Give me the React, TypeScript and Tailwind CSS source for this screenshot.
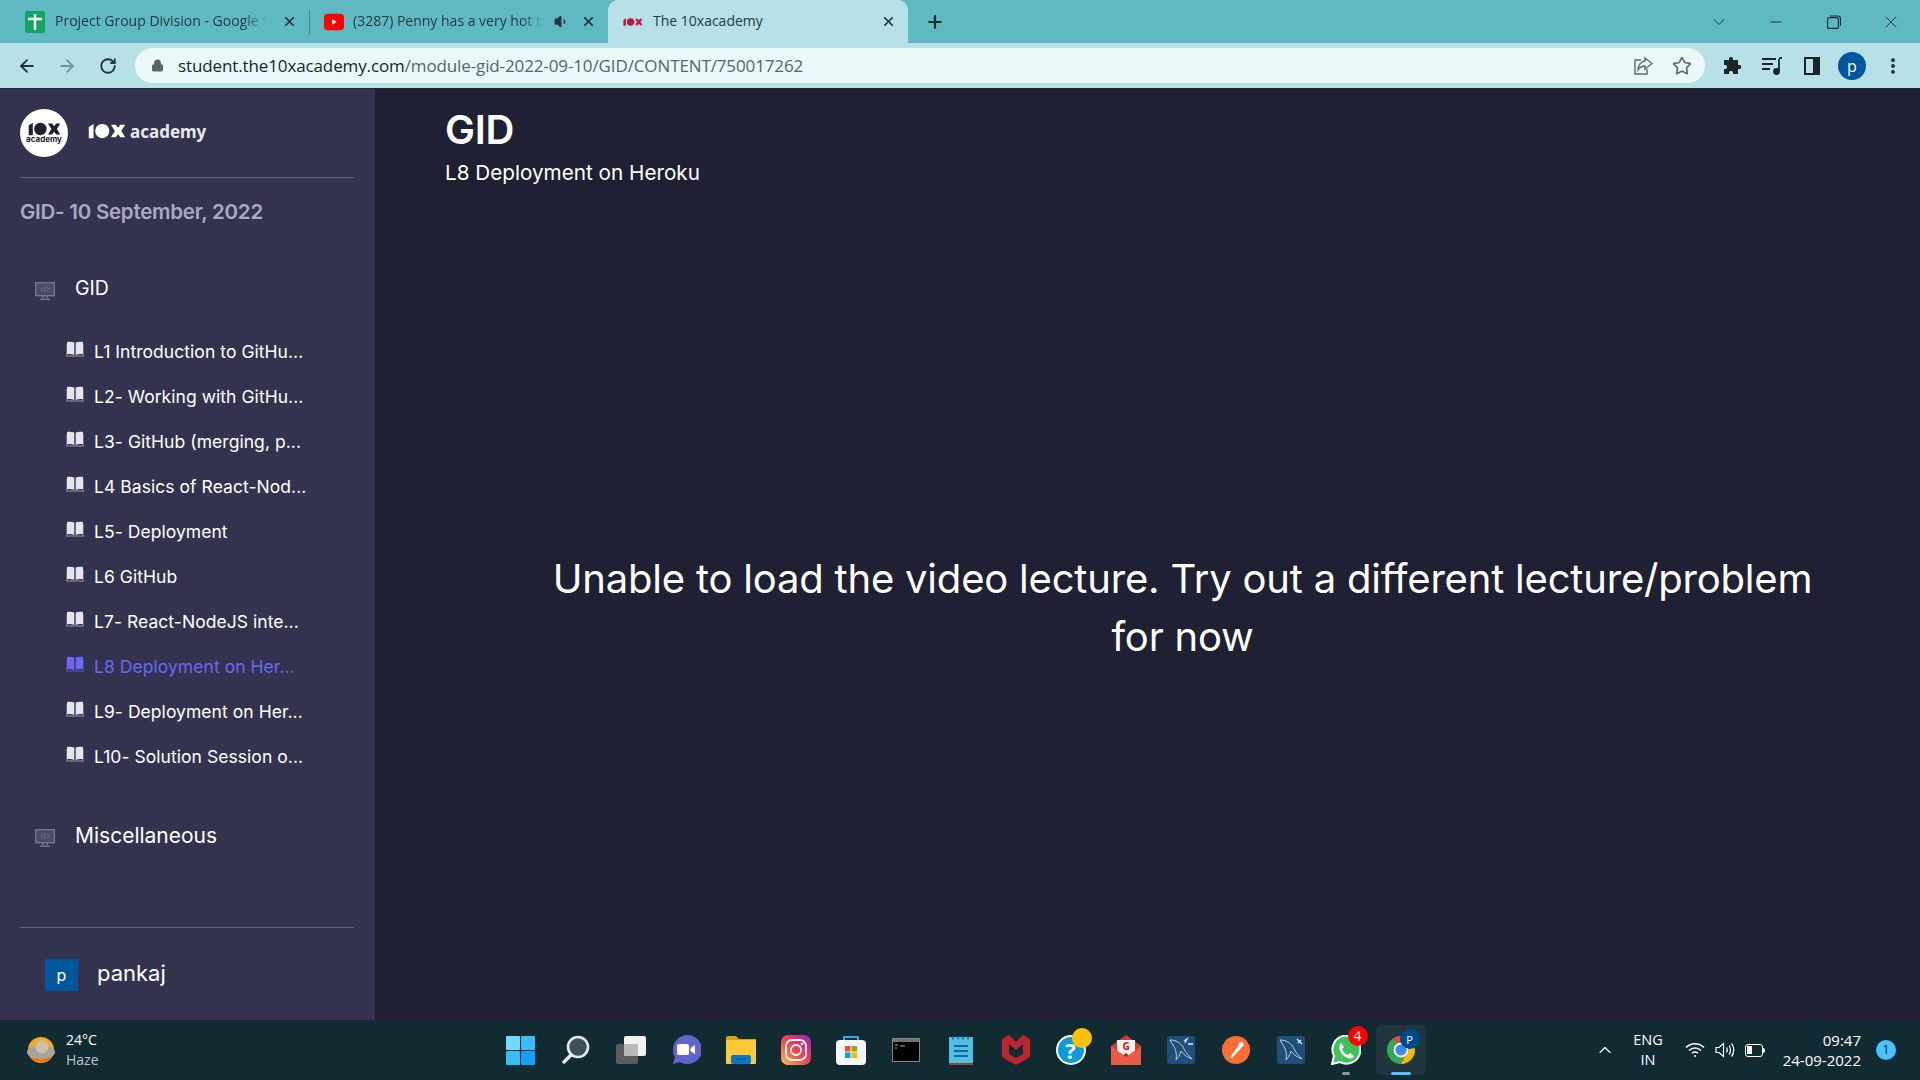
import { ArrowLeft, ArrowRight, RotateCw, Lock, Star, MoreVertical, X, Plus, ChevronDown, Minus, ChevronUp, Volume1 } from "lucide-react";

const lessons = [
  "L1 Introduction to GitHu...",
  "L2- Working with GitHu...",
  "L3- GitHub (merging, p...",
  "L4 Basics of React-Nod...",
  "L5- Deployment",
  "L6 GitHub",
  "L7- React-NodeJS inte...",
  "L8 Deployment on Her...",
  "L9- Deployment on Her...",
  "L10- Solution Session o...",
];

function Mark({ color, className }: { color: string; className: string }) {
  return (
    <svg viewBox="0 0 48 20" className={className} fill={color}>
      <path d="M1 5 L7 1 V19 H1 Z" />
      <circle cx="18" cy="10" r="9" />
      <path d="M29 2 h6 l3 4 3-4 h6 l-5 8 5 8 h-6 l-3-4-3 4 h-6 l5-8 Z" />
    </svg>
  );
}

function Book({ active }: { active?: boolean }) {
  const fill = active ? "#6a67f0" : "#e4e4ea";
  return (
    <svg viewBox="0 0 18 16" className="mt-[-7px] h-[16px] w-[18px] shrink-0">
      <path d="M1 1 C3.5 0.4 6 0.6 8.3 1.6 V14 C6 13 3.5 12.8 1 13.4 Z" fill={fill} />
      <path d="M17 1 C14.5 0.4 12 0.6 9.7 1.6 V14 C12 13 14.5 12.8 17 13.4 Z" fill={fill} />
      <path d="M0 3 V15 H18 V3" fill="none" stroke={active ? "#5553c4" : "#9a9aa8"} strokeWidth="1" />
    </svg>
  );
}

function Monitor() {
  return (
    <svg viewBox="0 0 20 20" className="mt-[4px] h-[20px] w-[20px] shrink-0" fill="none" stroke="#74748e">
      <rect x="0.7" y="1.7" width="18.6" height="13" strokeWidth="1.4" fill="#4b4b66" />
      <path d="M8 6 L5.8 8 L8 10 M12 6 L14.2 8 L12 10 M10.8 5.5 L9.2 10.5" strokeWidth="0.9" />
      <path d="M8 15 V17 M12 15 V17 M5 18.3 H15" strokeWidth="1.6" />
    </svg>
  );
}

function Tab({ icon, title, active, audio, className }: { icon: React.ReactNode; title: string; active?: boolean; audio?: boolean; className: string }) {
  return (
    <div className={`flex h-[43px] items-center pr-[12px] ${className} ${active ? "rounded-t-[10px] bg-[#b7e1e6]" : ""}`}>
      <span className="flex shrink-0 items-center">{icon}</span>
      <span className={`mt-[-2px] min-w-0 flex-1 overflow-hidden whitespace-nowrap text-[14px] text-[#263a3f] ${active ? "" : "[mask-image:linear-gradient(to_right,black_88%,transparent)]"}`}>{title}</span>
      {audio && (
        <Volume1 size={15} className="ml-[10px] mr-[12px] shrink-0 text-[#26363a]" fill="#26363a" />
      )}
      <X size={15} strokeWidth={2.6} className={`shrink-0 text-[#1f2d30] ${audio || active ? "" : "ml-[14px]"}`} />
    </div>
  );
}

function TaskIcon({ children, active, dot }: { children: React.ReactNode; active?: boolean; dot?: boolean }) {
  return (
    <div className={`relative flex h-[50px] w-[50px] items-center justify-center rounded-[5px] mx-[2.5px] ${active ? "bg-[#20353d]" : ""}`}>
      {children}
      {dot && <span className="absolute bottom-[0px] h-[3px] w-[8px] rounded-full bg-[#8a979b]" />}
      {active && <span className="absolute bottom-[0px] h-[3px] w-[20px] rounded-full bg-[#4cc2ff]" />}
    </div>
  );
}

function MysqlTile({ tail }: { tail: string }) {
  return (
    <svg viewBox="0 0 28 28" className="h-[28px] w-[28px]">
      <rect width="28" height="28" rx="3" fill="#1f4e79" />
      <path d="M3 4 C10 4 15 8 17 13 C19 17 22 20 25 23 C20 21 17 19 14 15 C13 19 11 22 9 24 C10 19 9 13 6 9 Z" fill="none" stroke="#b9cddd" strokeWidth="1" />
      <path d={tail} fill="none" stroke="#dbe6ee" strokeWidth="1.4" />
    </svg>
  );
}

export default function App() {
  return (
    <div className="flex h-[1080px] w-[1920px] flex-col overflow-hidden bg-[#1f2033] font-['Open_Sans',sans-serif]">
      {/* browser chrome */}
      <div className="flex h-[43px] shrink-0 items-center bg-[#5eb9c3]">
        <Tab
          className="w-[309px] pl-[25px]"
          title="Project Group Division - Google S"
          icon={
            <svg viewBox="0 0 20 22" className="mr-[10px] h-[22px] w-[20px]">
              <rect width="20" height="22" rx="2" fill="#13a362" />
              <path d="M10 3 V19 M3 8 H17" stroke="#fff" strokeWidth="2.4" />
            </svg>
          }
        />
        <div className="h-[24px] w-px bg-[#3e8790]" />
        <Tab
          className="w-[298px] pl-[14px]"
          audio
          title="(3287) Penny has a very hot b"
          icon={
            <svg viewBox="0 0 22 18" className="mr-[9px] h-[18px] w-[20px]">
              <rect width="22" height="18" rx="4" fill="#f00" />
              <path d="M9 6 L14 9 L9 12 Z" fill="#fff" />
            </svg>
          }
        />
        <Tab
          active
          className="w-[300px] pl-[15px]"
          title="The 10xacademy"
          icon={<Mark color="#c2183f" className="mr-[10px] h-[10px] w-[20px]" />}
        />
        <Plus size={20} strokeWidth={2.6} className="ml-[17px] text-[#1f2d30]" />
        <div className="ml-auto flex items-center pr-[19px] text-[#1c2a2d]">
          <ChevronDown size={20} strokeWidth={1.1} />
          <Minus size={18} strokeWidth={1.2} className="ml-[38px]" />
          <svg viewBox="0 0 14 14" className="ml-[42px] h-[14px] w-[14px]" fill="none" stroke="currentColor" strokeWidth="1.1">
            <rect x="0.6" y="2.6" width="10.8" height="10.8" rx="2" />
            <path d="M3 1 H11 Q13.4 1 13.4 3.4 V11" />
          </svg>
          <X size={20} strokeWidth={1.1} className="ml-[40px]" />
        </div>
      </div>
      <div className="flex h-[45px] shrink-0 items-center bg-[#b7e1e6]">
        <ArrowLeft size={20} strokeWidth={2.2} className="ml-[17px] text-[#24343a]" />
        <ArrowRight size={20} strokeWidth={2.2} className="ml-[20px] text-[#75939a]" />
        <RotateCw size={18} strokeWidth={2.4} className="ml-[22px] text-[#24343a]" />
        <div className="ml-[18px] flex h-[35px] w-[1570px] items-center rounded-full bg-[#ebf8f9] pl-[16px] pr-[13px]">
          <Lock size={13} strokeWidth={2.4} fill="#5a6468" className="text-[#5a6468]" />
          <span className="ml-[14px] whitespace-nowrap text-[17px] tracking-[-0.12px] text-[#53666b]">
            <span className="text-[#16262b]">student.the10xacademy.com</span>/module-gid-2022-09-10/GID/CONTENT/750017262
          </span>
          <svg viewBox="0 0 20 20" className="ml-auto h-[20px] w-[20px]" fill="none" stroke="#5f6a6e" strokeWidth="1.4">
            <path d="M8 4 H2 V18 H14 V13" />
            <path d="M12 2 L19 7.5 L12 13 V10 C8.5 10 6.5 11.5 5 14 C5 9 8 5.5 12 5 Z" />
          </svg>
          <Star size={20} strokeWidth={2} className="ml-[19px] text-[#5f6a6e]" />
        </div>
        <svg viewBox="0 0 20 20" className="ml-[17px] h-[20px] w-[20px]" fill="#1d2426">
          <path d="M7 2.5 C7 0.5 11 0.5 11 2.5 V4 H16 V9 H17.5 C19.8 9 19.8 13 17.5 13 H16 V18 H11 V16.5 C11 14.5 7 14.5 7 16.5 V18 H2 V13 H3.5 C5.5 13 5.5 9 3.5 9 H2 V4 H7 Z" />
        </svg>
        <svg viewBox="0 0 20 18" className="ml-[20px] h-[18px] w-[20px]" fill="none" stroke="#1d2426" strokeWidth="1.8">
          <path d="M0 2 H14 M0 7 H11 M0 12 H8" />
          <path d="M17 2 V14" />
          <path d="M17 1 H20" />
          <circle cx="14.5" cy="14.5" r="2.5" fill="#1d2426" />
        </svg>
        <div className="ml-[22px] flex h-[18px] w-[16px] justify-end border-[2.5px] border-[#1d2426] bg-[#b7e1e6]">
          <div className="w-[5px] bg-[#1d2426]" />
        </div>
        <div className="ml-[18px] flex h-[28px] w-[28px] items-center justify-center rounded-full bg-[#01579b] text-[16px] leading-none text-white">p</div>
        <MoreVertical size={20} strokeWidth={2.6} className="ml-[17px] text-[#1d2426]" />
      </div>

      {/* page */}
      <div className="flex min-h-0 flex-1 border-t border-[#1b2a30] font-['Inter',sans-serif]">
        <aside className="flex w-[375px] shrink-0 flex-col bg-[#33334f] pl-[20px] pr-[21px]">
          <div className="flex items-center pt-[20px] pb-[20px]">
            <div className="flex h-[48px] w-[48px] flex-col items-center justify-center rounded-full bg-white">
              <Mark color="#20202f" className="h-[14px] w-[33px]" />
              <span className="mt-[-1px] text-[8px] font-bold leading-[9px] text-[#20202f]">academy</span>
            </div>
            <div className="mb-[4px] ml-[20px] flex items-center">
              <Mark color="#fff" className="h-[16px] w-[38px]" />
              <span className="ml-[4px] font-['Noto_Sans',sans-serif] text-[17px] font-bold leading-none text-[#e8e8ee]">academy</span>
            </div>
          </div>
          <div className="h-px bg-[#62627a]" />
          <h2 className="mt-[21px] text-[20.5px] font-semibold leading-[26px] tracking-[-0.25px] text-[#a9a9c4]">GID- 10 September, 2022</h2>

          <div className="mt-[49px] flex h-[30px] items-center pl-[15px]">
            <Monitor />
            <span className="ml-[20px] text-[19.5px] text-white">GID</span>
          </div>
          <ul className="mt-[26px] flex flex-col pl-[46px]">
            {lessons.map((l, i) => (
              <li key={l} className="flex h-[45px] items-center gap-[10px]">
                <Book active={i === 7} />
                <span className={`whitespace-nowrap text-[17.5px] tracking-[0.05px] ${i === 7 ? "text-[#6a67f0]" : "text-white"}`}>{l}</span>
              </li>
            ))}
          </ul>
          <div className="mt-[41px] flex h-[30px] items-center pl-[15px]">
            <Monitor />
            <span className="ml-[20px] text-[21px] text-white">Miscellaneous</span>
          </div>
          <div className="mt-[76px] h-px bg-[#62627a]" />
          <div className="mt-[31px] flex items-center pl-[25px]">
            <div className="flex h-[32px] w-[33px] items-center justify-center bg-[#01579b] text-[16px] text-white">p</div>
            <span className="ml-[19px] mt-[-4px] text-[22px] text-white">pankaj</span>
          </div>
        </aside>
        <main className="flex min-w-0 flex-1 flex-col pl-[70px]">
          <h1 className="mt-[19px] text-[40px] font-semibold leading-[44px] tracking-[-0.3px] text-white">GID</h1>
          <p className="mt-[6px] text-[20.7px] leading-[30px] text-white">L8 Deployment on Heroku</p>
          <div className="mt-[362px] flex justify-center">
            <p className="w-[1300px] text-center text-[40px] leading-[58px] tracking-[-0.2px] text-white">
              Unable to load the video lecture. Try out a different lecture/problem for now
            </p>
          </div>
        </main>
      </div>

      {/* windows taskbar */}
      <footer className="grid h-[60px] shrink-0 grid-cols-[1fr_auto_1fr] items-center bg-[#122a32] font-['Open_Sans',sans-serif]">
        <div className="flex items-center pl-[26px]">
          <svg viewBox="0 0 30 26" className="h-[26px] w-[30px]">
            <circle cx="15" cy="13" r="13" fill="#f9a825" />
            <path d="M15 26 A13 13 0 0 0 28 14 H2 A13 13 0 0 0 15 26" fill="#ef7c00" />
            <ellipse cx="15" cy="15" rx="14" ry="7" fill="#a9a49a" />
            <circle cx="16" cy="10" r="6.5" fill="#c8c0b2" />
          </svg>
          <div className="ml-[10px] text-[14px] leading-[20px]">
            <div className="text-white">24°C</div>
            <div className="text-[#bcc5c8]">Haze</div>
          </div>
        </div>
        <div className="ml-[1px] flex items-center">
          <TaskIcon>
            <svg viewBox="0 0 29 29" className="h-[29px] w-[29px]">
              <rect width="14" height="14" rx="1" fill="#6fdcff" />
              <rect x="15" width="14" height="14" rx="1" fill="#38bdf8" />
              <rect y="15" width="14" height="14" rx="1" fill="#35bdf6" />
              <rect x="15" y="15" width="14" height="14" rx="1" fill="#14a0f5" />
            </svg>
          </TaskIcon>
          <TaskIcon>
            <svg viewBox="0 0 28 30" className="h-[30px] w-[28px]" fill="none">
              <circle cx="16" cy="12" r="10" fill="#3d5158" stroke="#e6e9ea" strokeWidth="2.6" />
              <path d="M9 20 L2 27" stroke="#e6e9ea" strokeWidth="3.4" strokeLinecap="round" />
            </svg>
          </TaskIcon>
          <TaskIcon>
            <svg viewBox="0 0 30 28" className="h-[28px] w-[30px]">
              <rect y="8" width="22" height="20" rx="2" fill="#5c5c5c" />
              <rect x="8" width="22" height="20" rx="2" fill="#f2f2f2" />
              <rect x="8" y="8" width="14" height="12" fill="#b9b9b9" />
            </svg>
          </TaskIcon>
          <TaskIcon>
            <svg viewBox="0 0 30 30" className="h-[30px] w-[30px]">
              <path d="M2 29 L4 22 A14.5 14.5 0 1 1 9 27 Z" fill="#6264c8" />
              <rect x="6" y="9" width="12" height="11" rx="2" fill="#fff" />
              <path d="M19.5 13 L24 10 V19 L19.5 16 Z" fill="#fff" />
            </svg>
          </TaskIcon>
          <TaskIcon>
            <svg viewBox="0 0 30 28" className="h-[28px] w-[30px]">
              <path d="M0 2 Q0 0 2 0 H10 L13 3 H30 V10 H0 Z" fill="#d9a206" />
              <rect y="4" width="30" height="24" rx="1" fill="#fcc93a" />
              <rect x="5" y="19" width="20" height="9" rx="2" fill="#0b78c4" />
              <path d="M10 23 H20" stroke="#0a4f86" strokeWidth="1.2" />
            </svg>
          </TaskIcon>
          <TaskIcon>
            <svg viewBox="0 0 30 30" className="h-[30px] w-[30px]">
              <defs>
                <linearGradient id="insta" x1="0" y1="1" x2="1" y2="0">
                  <stop offset="0" stopColor="#fdc04e" />
                  <stop offset="0.45" stopColor="#ef4b4b" />
                  <stop offset="0.75" stopColor="#d3297f" />
                  <stop offset="1" stopColor="#6a3fc4" />
                </linearGradient>
              </defs>
              <rect width="30" height="30" rx="7" fill="url(#insta)" />
              <rect x="5" y="5" width="20" height="20" rx="6" fill="none" stroke="#fff" strokeWidth="1.8" />
              <circle cx="15" cy="15" r="5" fill="none" stroke="#fff" strokeWidth="1.8" />
              <circle cx="21" cy="9" r="1.3" fill="#fff" />
            </svg>
          </TaskIcon>
          <TaskIcon>
            <svg viewBox="0 0 30 30" className="h-[30px] w-[30px]">
              <path d="M8 6 V2 H22 V6" fill="none" stroke="#2ea8e0" strokeWidth="2" />
              <rect y="5" width="30" height="25" rx="4" fill="#f5f5f5" />
              <rect x="9" y="11" width="5.5" height="5.5" fill="#f25022" />
              <rect x="15.5" y="11" width="5.5" height="5.5" fill="#7fba00" />
              <rect x="9" y="17.5" width="5.5" height="5.5" fill="#00a4ef" />
              <rect x="15.5" y="17.5" width="5.5" height="5.5" fill="#ffb900" />
            </svg>
          </TaskIcon>
          <TaskIcon>
            <svg viewBox="0 0 28 24" className="h-[24px] w-[28px]">
              <rect x="0.5" y="0.5" width="27" height="23" fill="#000" stroke="#7d8688" />
              <rect x="1" y="1" width="26" height="3" fill="#6b7476" />
              <path d="M3 7 H6 M3 10 H5 M8 8 H13" stroke="#b0b0b0" strokeWidth="1" />
            </svg>
          </TaskIcon>
          <TaskIcon>
            <svg viewBox="0 0 24 30" className="h-[30px] w-[24px]">
              <rect y="2" width="24" height="28" fill="#8a4a1f" />
              <rect y="2" width="24" height="26" fill="#54bde6" />
              <path d="M5 11 H19 M5 16 H19 M5 21 H19" stroke="#0e6a99" strokeWidth="1.8" />
              <path d="M3 3 H21" stroke="#1d7fae" strokeWidth="3" strokeDasharray="2 3" />
            </svg>
          </TaskIcon>
          <TaskIcon>
            <svg viewBox="0 0 28 30" className="h-[30px] w-[28px]">
              <path d="M0 4 L7 0 L14 7 L21 0 L28 4 V22 L14 30 L0 22 Z" fill="#b9272c" />
              <path d="M7 9 L14 15 L21 9 V19 L14 23 L7 19 Z" fill="#122a32" />
            </svg>
          </TaskIcon>
          <TaskIcon>
            <span className="relative flex h-[30px] w-[30px] items-center justify-center rounded-full border-2 border-white bg-[#0f9ad8] text-[22px] font-bold leading-none text-white">
              ?
              <span className="absolute right-[-8px] top-[-9px] h-[20px] w-[20px] rounded-full bg-[#ffc107]" />
            </span>
          </TaskIcon>
          <TaskIcon>
            <svg viewBox="0 0 30 30" className="h-[30px] w-[30px]">
              <path d="M0 11 L15 0 L30 11 V30 H0 Z" fill="#d9382e" />
              <rect x="6" y="5" width="18" height="16" fill="#f7f1ee" />
              <path d="M0 30 L15 18 L30 30 Z" fill="#b92a22" />
              <path d="M0 11 L15 22 L30 11 V30 H0 Z" fill="#ea5a47" />
              <text x="15" y="15" textAnchor="middle" fontSize="10" fontWeight="700" fill="#a32020">G</text>
            </svg>
          </TaskIcon>
          <TaskIcon>
            <MysqlTile tail="M17 5 L20 3 L18 7 M21 8 H26" />
          </TaskIcon>
          <TaskIcon>
            <svg viewBox="0 0 28 28" className="h-[28px] w-[28px]">
              <circle cx="14" cy="14" r="14" fill="#fc6d36" />
              <path d="M8 21 L17 9 L20 11 L10 22 Z" fill="#fff" />
              <circle cx="19" cy="8.5" r="2.6" fill="#fff" />
            </svg>
          </TaskIcon>
          <TaskIcon>
            <MysqlTile tail="M20 3 L25 8 M21 7 L24 4" />
          </TaskIcon>
          <TaskIcon dot>
            <span className="relative flex h-[30px] w-[30px] items-center justify-center">
              <svg viewBox="0 0 30 30" className="h-[30px] w-[30px]">
                <path d="M1 29 L3 21 A14 14 0 1 1 9 27 Z" fill="#3cc45a" stroke="#fff" strokeWidth="2" />
                <path d="M10 8 L13 12 L11 14 C12 17 14 19 17 20 L19 18 L23 21 C21 25 16 24 12 20 C8 16 7 11 10 8 Z" fill="#fff" />
              </svg>
              <span className="absolute right-[-7px] top-[-9px] flex h-[20px] w-[20px] items-center justify-center rounded-full bg-[#f00] text-[14px] leading-none text-white">4</span>
            </span>
          </TaskIcon>
          <TaskIcon active>
            <span className="relative flex h-[28px] w-[28px] items-center justify-center">
              <svg viewBox="0 0 28 28" className="h-[28px] w-[28px]">
                <circle cx="14" cy="14" r="14" fill="#34a853" />
                <path d="M14 0 A14 14 0 0 1 26 7 H14 L5 4 A14 14 0 0 1 14 0" fill="#ea4335" />
                <path d="M26 7 A14 14 0 0 1 14 28 L20 17 Z" fill="#fbbc04" />
                <circle cx="14" cy="14" r="6.5" fill="#4285f4" stroke="#fff" strokeWidth="1.8" />
              </svg>
              <span className="absolute right-[-5px] top-[-7px] flex h-[20px] w-[20px] items-center justify-center rounded-full bg-[#01478c] text-[11px] leading-none text-white">P</span>
            </span>
          </TaskIcon>
        </div>
        <div className="flex items-center justify-end pr-[24px] text-white">
          <ChevronUp size={20} strokeWidth={1.3} />
          <div className="ml-[18px] text-center text-[14.5px] leading-[20px]">
            <div>ENG</div>
            <div>IN</div>
          </div>
          <svg viewBox="0 0 20 16" className="ml-[22px] h-[16px] w-[20px]" fill="none" stroke="#fff" strokeWidth="1.5">
            <path d="M1 5.5 C6 0.5 14 0.5 19 5.5 M4 8.5 C7.5 5 12.5 5 16 8.5 M7 11.2 C9 9.5 11 9.5 13 11.2" />
            <circle cx="10" cy="14" r="1" fill="#fff" stroke="none" />
          </svg>
          <svg viewBox="0 0 20 16" className="ml-[10px] h-[16px] w-[20px]" fill="none" stroke="#fff" strokeWidth="1.2">
            <path d="M1 5.5 H4 L8.5 1.5 V14.5 L4 10.5 H1 Z" />
            <path d="M11.5 5.5 C12.5 7 12.5 9 11.5 10.5 M14 3.5 C16 6 16 10 14 12.5 M16.5 1.5 C19.5 5 19.5 11 16.5 14.5" />
          </svg>
          <div className="ml-[10px] flex h-[13px] w-[18px] items-center rounded-[3px] border border-white p-[1.5px]">
            <div className="h-full w-[5px] bg-white" />
          </div>
          <div className="h-[5px] w-[2px] rounded-r-sm bg-white" />
          <div className="ml-[18px] text-right text-[15px] leading-[20px]">
            <div>09:47</div>
            <div>24-09-2022</div>
          </div>
          <div className="ml-[15px] flex h-[20px] w-[20px] items-center justify-center rounded-full bg-[#4cc2ff] text-[12px] text-[#0b1e24]">1</div>
        </div>
      </footer>
    </div>
  );
}
